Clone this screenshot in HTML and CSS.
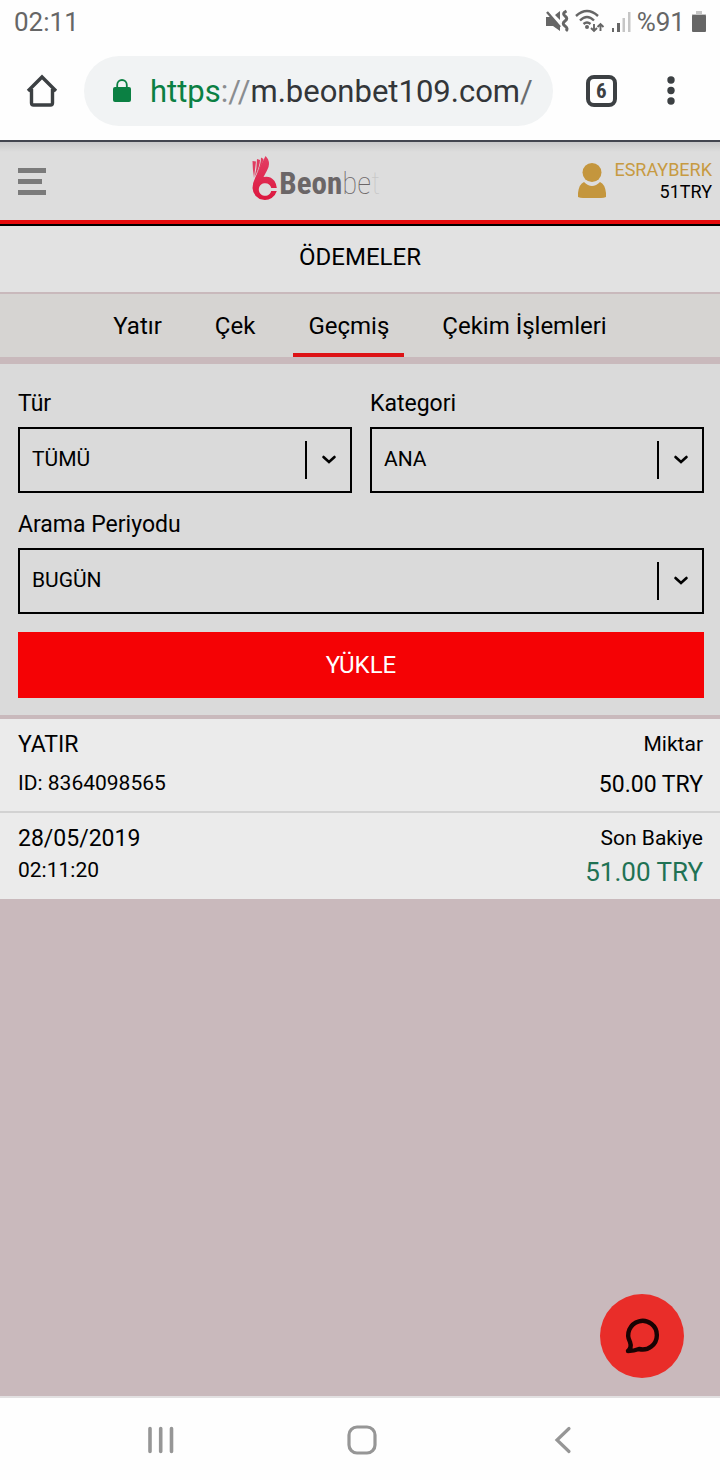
FILE: index.html
```html
<!DOCTYPE html>
<html lang="tr">
<head>
<meta charset="utf-8">
<meta name="viewport" content="width=device-width, initial-scale=1">
<title>Ödemeler</title>
<link rel="stylesheet" href="styles.css">
</head>
<body>
<div class="status">
  <span class="status-text">02:11</span>
  <div class="status-icons">
    <svg width="24" height="24" viewBox="0 0 24 24" fill="none" stroke="#666" stroke-width="2">
      <path d="M1 8h5l9 9v5l-7-5H1zM10 6l5-4v9z" fill="#666" stroke="none"/>
      <path d="M2 3l13 15" stroke-width="2.400"/>
      <path d="M21.500 2q-5 2.500-1.500 5t0 5 0 5 1 5" stroke-width="3"/>
    </svg>
    <svg width="30" height="24" viewBox="0 0 30 24" fill="none" stroke="#666" stroke-width="2.400">
      <path d="M1 7q11-10 22 0M5 11.500q7-7 14 0M8.500 15q3.500-3 7 0"/>
      <circle cx="12" cy="18" r="2" fill="#666" stroke="none"/>
      <path d="M19 15v7m-3-3l3 3 3-3M25.500 22v-7m-3 3l3-3 3 3" stroke-width="1.900"/>
    </svg>
    <svg width="20" height="24" viewBox="0 0 20 24">
      <path d="M1 19h2v4H1zM6 14h3v9H6z" fill="#666"/>
      <path d="M11.500 9h2.500v14h-2.500zM17 3h2.500v20H17z" fill="#c6c6c6"/>
    </svg>
    <span class="status-text percent">%91</span>
    <svg width="16" height="24" viewBox="0 0 16 24">
      <path d="M5 2h6v3h4v4H1V5h4z" fill="#c6c6c6"/>
      <rect x="1" y="6" width="14" height="17" rx="1" fill="#666"/>
    </svg>
  </div>
</div>

<div class="browser">
  <button class="icon-button" aria-label="Ana sayfa">
    <svg width="32" height="34" viewBox="0 0 32 34" fill="none" stroke="#3c4043" stroke-width="3.400">
      <path d="M2 17L16 3l14 14M5.500 15v14q0 2 2 2h17q2 0 2-2V15"/>
    </svg>
  </button>
  <button class="address">
    <svg width="20" height="26" viewBox="0 0 20 26">
      <path d="M5.200 10V7a4.800 5 0 0 1 9.600 0v3" fill="none" stroke="#0b8043" stroke-width="1.800"/>
      <rect x="1" y="9" width="18" height="15" rx="2" fill="#0b8043"/>
    </svg>
    <span class="url"><span class="secure">https</span><span class="slashes">://</span>m.beonbet109.com<span class="path">/</span></span>
  </button>
  <button class="tab-count" aria-label="Sekmeler">6</button>
  <button class="icon-button" aria-label="Menü">
    <svg width="8" height="30" viewBox="0 0 8 30" fill="#3c4043"><circle cx="4" cy="4" r="3.700"/><circle cx="4" cy="14.500" r="3.700"/><circle cx="4" cy="25" r="3.700"/></svg>
  </button>
</div>

<header class="site-header">
  <button class="menu-button" aria-label="Menü">
    <svg width="28" height="28" viewBox="0 0 28 28" fill="#7b7b7b"><path d="M0 0h28v5H0zM0 11h24v5H0zM0 22h28v5H0z"/></svg>
  </button>
  <a class="logo" href="#">
    <svg width="26" height="48" viewBox="0 0 26 48">
      <defs><linearGradient id="brand" x1="0" y1="0" x2="0" y2="1"><stop offset="0" stop-color="#e33e64"/><stop offset="1" stop-color="#dc183f"/></linearGradient></defs>
      <path fill-rule="evenodd" d="M13.500 1q3.500 3 3.500 8 0 3-2 6.500L11.500 22q7-1.500 11 4 2 3 2.300 7H19.200a6.300 6.300 0 1 0 0 3h5.600a12.400 12.400 0 0 1-24.300-3q0-5 3-11l5.500-12q2.500-5 4.500-9z" fill="url(#brand)"/>
      <path d="M.5 6l3.500.5L2 23Q.5 14 .5 6zM5 4l3 1q0 6-5.300 17Q5 12 5 4zM9 2.500l2.500 1.500q-1 6-7 15Q9 10 9 2.500z" fill="#e03c60"/>
    </svg>
    <span class="wordmark"><strong>Beon</strong><span class="thin">be</span><span class="thin faded">t</span></span>
  </a>
  <a class="account" href="#">
    <svg width="28" height="36" viewBox="0 0 28 36" fill="#c4963d">
      <ellipse cx="14" cy="9.500" rx="9.500" ry="9.500"/>
      <path d="M6 19q8 8 16 0 5 2 6 11v4q-2 1-5 1H5q-3 0-5-1v-4q1-9 6-11z"/>
    </svg>
    <span class="account-text"><span class="user">ESRAYBERK</span><span>51TRY</span></span>
  </a>
</header>

<main class="content">
  <h1 class="title">ÖDEMELER</h1>
  <nav class="tabs">
    <a class="tab" href="#">Yatır</a>
    <a class="tab" href="#">Çek</a>
    <a class="tab active" href="#" aria-current="page">Geçmiş</a>
    <a class="tab" href="#">Çekim İşlemleri</a>
  </nav>
  <form class="filters">
    <div class="field">
      <label for="type">Tür</label>
      <div class="select-box"><select id="type"><option>TÜMÜ</option></select>
        <span class="arrow"><svg width="16" height="10" viewBox="0 0 16 10" fill="none" stroke="#000" stroke-width="2.600" stroke-linecap="round"><path d="M2.500 2L8 7l5.500-5"/></svg></span></div>
    </div>
    <div class="field">
      <label for="category">Kategori</label>
      <div class="select-box"><select id="category"><option>ANA</option></select>
        <span class="arrow"><svg width="16" height="10" viewBox="0 0 16 10" fill="none" stroke="#000" stroke-width="2.600" stroke-linecap="round"><path d="M2.500 2L8 7l5.500-5"/></svg></span></div>
    </div>
    <div class="field wide">
      <label for="period">Arama Periyodu</label>
      <div class="select-box"><select id="period"><option>BUGÜN</option></select>
        <span class="arrow"><svg width="16" height="10" viewBox="0 0 16 10" fill="none" stroke="#000" stroke-width="2.600" stroke-linecap="round"><path d="M2.500 2L8 7l5.500-5"/></svg></span></div>
    </div>
    <button class="load wide" type="button">YÜKLE</button>
  </form>
  <section class="history">
    <div class="entry">
      <div class="entry-line"><span class="medium">YATIR</span><span>Miktar</span></div>
      <div class="entry-line amount-line"><span>ID: 8364098565</span><span class="medium">50.00 TRY</span></div>
    </div>
    <div class="entry">
      <div class="entry-line"><span class="medium">28/05/2019</span><span>Son Bakiye</span></div>
      <div class="entry-line"><span>02:11:20</span><span class="balance">51.00 TRY</span></div>
    </div>
  </section>
  <button class="chat" aria-label="Sohbet">
    <svg width="38" height="38" viewBox="0 0 38 38" fill="none" stroke="#180303" stroke-width="4.400" stroke-linejoin="round" stroke-linecap="round">
      <path d="M7 25A14.300 14.300 0 1 1 16 32Q11 34 5 34q4-3.500 2-9z"/>
    </svg>
  </button>
</main>

<nav class="system-nav">
  <button class="icon-button" aria-label="Son uygulamalar"><svg width="26" height="28" viewBox="0 0 26 28" stroke="#969696" stroke-width="3.600" stroke-linecap="round"><path d="M2 2.500v23M12.700 2.500v23M23.500 2.500v23"/></svg></button>
  <button class="icon-button" aria-label="Ana ekran"><svg width="30" height="30" viewBox="0 0 30 30" fill="none" stroke="#969696" stroke-width="3.200"><rect x="2" y="2" width="26" height="26" rx="8"/></svg></button>
  <button class="icon-button" aria-label="Geri"><svg width="18" height="28" viewBox="0 0 18 28" fill="none" stroke="#969696" stroke-width="3.200" stroke-linecap="round"><path d="M15 2.500L3 14l12 11.500"/></svg></button>
</nav>
</body>
</html>
```
FILE: styles.css
```css
* { box-sizing: border-box; }
body {
  margin: 0;
  min-height: 100vh;
  display: flex;
  flex-direction: column;
  background: #fefefe;
  color: #000;
  font-family: Roboto, sans-serif;
  font-size: 21px;
}
button { border: 0; padding: 0; background: none; color: inherit; font: inherit; }
a { color: inherit; text-decoration: none; }
svg { display: block; flex: none; }

.status {
  height: 44px;
  padding: 0 13px 0 14px;
  display: flex;
  align-items: center;
  justify-content: space-between;
}
.status-text { color: #666; font-size: 26px; line-height: 44px; }
.status-icons { display: flex; align-items: center; gap: 6px; margin-top: -2px; }
.percent { margin-top: 2px; }

.browser {
  height: 98px;
  padding: 12px 45px 14px 26px;
  display: flex;
  align-items: center;
  border-bottom: 2px solid #42454f;
}
.icon-button { display: flex; justify-content: center; align-items: center; }
.address {
  flex: 1;
  height: 70px;
  margin: 0 33px 0 26px;
  padding: 0 20px 0 28px;
  display: flex;
  align-items: center;
  gap: 18px;
  border-radius: 35px;
  background: #f1f3f4;
}
.url { color: #333639; font-size: 31px; line-height: 36px; padding-top: 2px; white-space: nowrap; }
.secure { color: #0b8043; }
.slashes { color: #8a8d90; }
.path { color: #6a6d70; }
.tab-count {
  width: 32px;
  height: 32px;
  margin-right: 50px;
  border: 4px solid #3c4043;
  border-radius: 8px;
  color: #3c4043;
  font-family: "Roboto Condensed", Roboto, sans-serif;
  font-size: 21px;
  font-weight: 700;
  line-height: 24px;
}

.site-header {
  height: 84px;
  padding: 0 8px 0 18px;
  display: flex;
  justify-content: space-between;
  align-items: center;
  border-bottom: 2px solid #000;
  background: linear-gradient(#c8c8c9, #dddddd 10px);
  box-shadow: inset 0 -4px #e60a0c;
}
.menu-button { margin-bottom: 2px; }
.logo { display: flex; align-items: center; gap: 1px; padding: 0 0 8px 8px; }
.wordmark {
  margin-top: 9px;
  color: #6b6667;
  font-family: "Roboto Condensed", "Liberation Sans Narrow", Roboto, sans-serif;
  font-size: 31px;
  line-height: 36px;
  white-space: nowrap;
}
.thin { font-weight: 100; }
.faded { color: #c8c8c8; }
.account { display: flex; align-items: center; gap: 8px; padding-bottom: 4px; }
.account-text { display: flex; flex-direction: column; align-items: flex-end; font-size: 18px; line-height: 22px; }
.user { color: #c79a42; }

.content {
  flex: 1;
  position: relative;
  display: flex;
  flex-direction: column;
  background: #c9b9bc;
}
.title {
  margin: 0 0 2px;
  padding: 15px 0 19px;
  background: #e2e2e2;
  font-size: 24px;
  font-weight: 400;
  line-height: 32px;
  text-align: center;
}
.tabs {
  margin-bottom: 7px;
  display: flex;
  justify-content: center;
  gap: 23px;
  background: #d6d4d2;
  font-size: 24px;
  line-height: 32px;
}
.tab { padding: 16px 15px 11px; border-bottom: 4px solid transparent; }
.active { border-color: #dd1215; }

.filters {
  margin-bottom: 4px;
  padding: 24px 16px 17px 18px;
  display: grid;
  grid-template-columns: 1fr 1fr;
  gap: 18px;
  background: #dadada;
}
.field { min-width: 0; }
.field label { display: block; margin-bottom: 7px; font-size: 23px; line-height: 32px; }
.wide { grid-column: 1 / -1; }
.field.wide { margin-top: -2px; }
.select-box { display: flex; align-items: center; height: 66px; border: 2px solid #000; }
.select-box select {
  flex: 1;
  min-width: 0;
  height: 100%;
  padding: 0 0 2px 12px;
  border: 0;
  appearance: none;
  background: none;
  color: #000;
  font: 21px Roboto, sans-serif;
}
.arrow {
  width: 45px;
  height: 38px;
  display: flex;
  align-items: center;
  justify-content: center;
  border-left: 2px solid #000;
}
.load { height: 66px; background: #f50205; color: #fff; font-size: 24px; }

.history { display: flex; flex-direction: column; gap: 2px; background: #d2d2d2; }
.entry { padding: 10px 17px 10px 18px; background: #ebebeb; }
.entry:first-child { padding-bottom: 9px; }
.entry-line { display: flex; justify-content: space-between; align-items: flex-start; line-height: 30px; }
.amount-line { padding-top: 7px; }
.medium { font-size: 23px; line-height: 32px; }
.amount-line .medium { line-height: 34px; }
.balance { color: #1f7254; font-size: 26px; line-height: 34px; }

.chat {
  position: absolute;
  right: 36px;
  bottom: 18px;
  width: 84px;
  height: 84px;
  display: flex;
  align-items: center;
  justify-content: center;
  border-radius: 50%;
  background: #e92d29;
}
.system-nav {
  height: 84px;
  padding: 2px 56px 0 60px;
  display: grid;
  grid-template-columns: repeat(3, 1fr);
  align-items: center;
  border-top: 2px solid #e2e0e1;
}
```
